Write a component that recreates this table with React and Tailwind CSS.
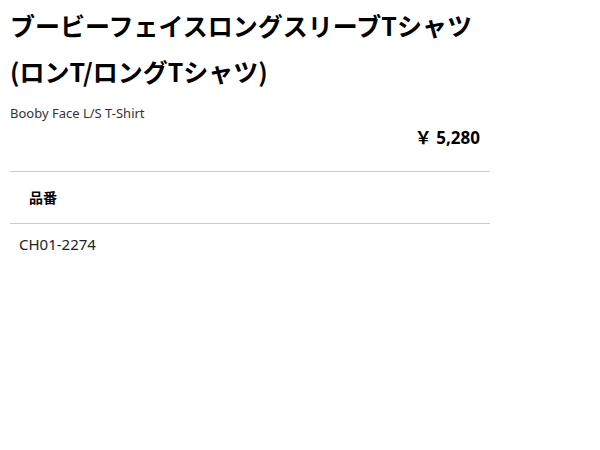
export default function App() {
  return (
    <div className="min-h-screen bg-white text-[#000] font-['Noto_Sans','Noto_Sans_CJK_JP',sans-serif]">
      <div className="w-[480px] ml-[10px] pt-[2px]">
        <h1 className="text-[25px] font-bold leading-[46px] font-['Noto_Sans_CJK_JP',sans-serif]">
          ブービーフェイスロングスリーブTシャツ
          <br />
          (ロンT/ロングTシャツ)
        </h1>

        <p className="mt-[9px] text-[13px] leading-[20px] text-[#333]">Booby Face L/S T-Shirt</p>

        <div className="mt-[2px] pr-[10px] text-right text-[17px] font-bold leading-[26px]">
          ￥ 5,280
        </div>

        <table className="w-full mt-[20px] border-collapse">
          <thead>
            <tr className="border-t border-b border-[#ccc]">
              <th className="text-left pl-[19px] h-[52px] text-[14px] font-bold">品番</th>
            </tr>
          </thead>
          <tbody>
            <tr>
              <td className="pl-[9px] pt-[10px] text-[15px] leading-[20px] text-[#222]">CH01-2274</td>
            </tr>
          </tbody>
        </table>
      </div>
    </div>
  );
}
